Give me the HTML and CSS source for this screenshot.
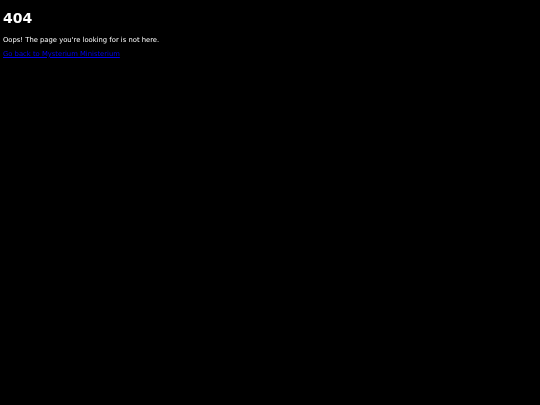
FILE: index.html
```html
<!DOCTYPE html>
<html>
<head>
<meta charset="utf-8">
<link rel="stylesheet" href="styles.css">
</head>
<body class="page">
<h1 class="title">404</h1>
<p class="message">Oops! The page you're looking for is not here.</p>
<a class="back" href="#">Go back to Mysterium Ministerium</a>
</body>
</html>
```
FILE: styles.css
```css
html { background: #000; }
.page {
  margin: 4px 3px;
  background: #000;
  color: #fff;
  font-family: "DejaVu Sans", sans-serif;
  font-size: 6.8px;
  will-change: transform;
}
.title {
  font-size: 14px;
  font-weight: bold;
  margin: 5.5px 0 10.4px;
}
.message {
  margin: 0 0 6px;
}
.back {
  color: #0000ee;
  text-decoration: underline;
}
```
